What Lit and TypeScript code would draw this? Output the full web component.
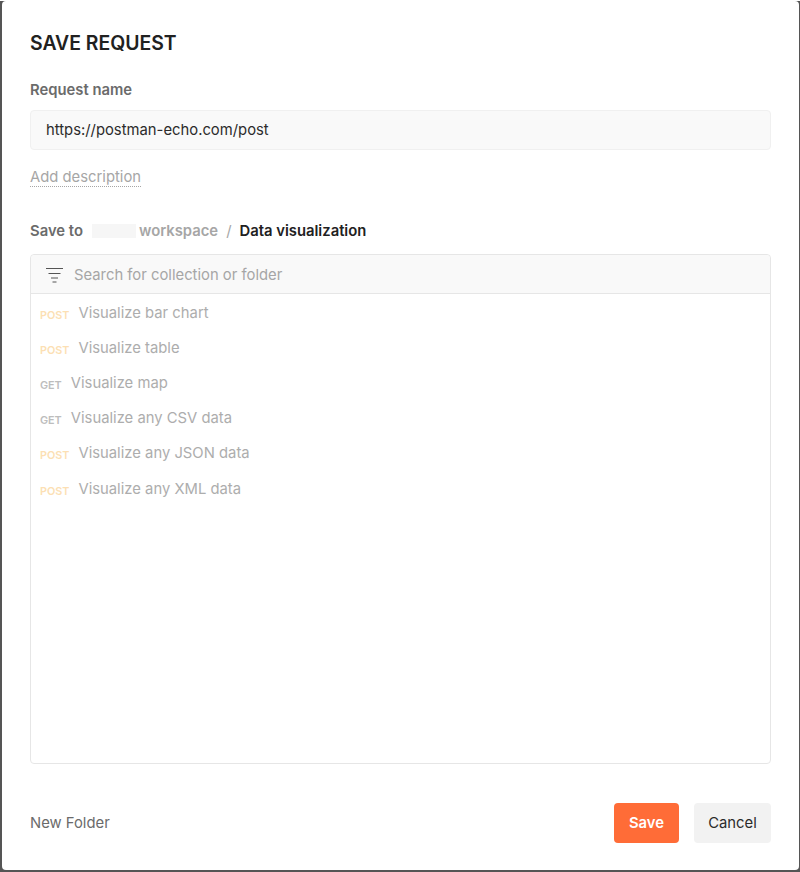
import { LitElement, html, css } from "lit";
import { customElement } from "lit/decorators.js";

const items: [string, string][] = [
  ["POST", "Visualize bar chart"],
  ["POST", "Visualize table"],
  ["GET", "Visualize map"],
  ["GET", "Visualize any CSV data"],
  ["POST", "Visualize any JSON data"],
  ["POST", "Visualize any XML data"],
];

@customElement("app-root")
export class AppRoot extends LitElement {
  static styles = css`
    :host {
      display: block;
      width: 800px;
      height: 872px;
      background: #555;
      font-family: Inter, "Liberation Sans", sans-serif;
      color: #212121;
    }
    .dialog {
      box-sizing: border-box;
      width: 797px;
      height: 869px;
      margin-left: 1.5px;
      margin-top: 1px;
      background: #fff;
      border-radius: 4px;
      padding: 31px 27.5px 0 28.5px;
      display: flex;
      flex-direction: column;
    }
    h1 {
      margin: 0;
      font-size: 19.4px;
      line-height: 22px;
      font-weight: 600;
      color: #212121;
    }
    .label {
      margin-top: 27px;
      font-size: 14.82px;
      line-height: 18px;
      font-weight: 600;
      color: #6b6b6b;
    }
    .name {
      box-sizing: border-box;
      margin-top: 11px;
      height: 40px;
      background: #f9f9f9;
      border: 1px solid #f0f0f0;
      border-radius: 4px;
      padding: 0 15px 1px;
      display: flex;
      align-items: center;
      font-size: 14.82px;
      color: #2b2b2b;
    }
    .desc {
      margin-top: 18px;
      align-self: flex-start;
      font-size: 14.82px;
      line-height: 18px;
      color: #a6a6a6;
      border-bottom: 1px dotted #a6a6a6;
    }
    .crumbs {
      margin-top: 35px;
      display: flex;
      align-items: center;
      font-size: 14.82px;
      line-height: 18px;
      font-weight: 600;
      color: #6b6b6b;
    }
    .redact {
      width: 44px;
      height: 14px;
      margin: 0 3px 0 9px;
      background: #f6f6f6;
    }
    .ws { color: #a6a6a6; }
    .sep { margin: 0 8px; color: #a6a6a6; font-weight: 400; }
    .cur { color: #212121; }
    .panel {
      margin-top: 14px;
      height: 510px;
      box-sizing: border-box;
      border: 1px solid #e6e6e6;
      border-radius: 4px;
      display: flex;
      flex-direction: column;
    }
    .search {
      box-sizing: border-box;
      height: 39px;
      flex: none;
      background: #f9f9f9;
      border-bottom: 1px solid #e6e6e6;
      border-radius: 4px 4px 0 0;
      display: flex;
      align-items: center;
      padding: 1px 0 0 15px;
      gap: 11px;
      font-size: 14.82px;
      color: #a6a6a6;
    }
    .search svg { display: block; flex: none; }
    .row {
      height: 35.2px;
      display: flex;
      align-items: center;
      gap: 9px;
      padding-left: 9px;
      font-size: 14.82px;
      color: #adadad;
    }
    .list { margin-top: 1px; }
    .m {
      font-size: 10.8px;
      font-weight: 600;
      padding-top: 6px;
      line-height: 12px;
    }
    .post { color: #fcdfb4; }
    .get { color: #bdbdbd; }
    .foot {
      flex: 1;
      display: flex;
      align-items: center;
      font-size: 14.82px;
      padding-top: 11px;
    }
    .new { color: #6b6b6b; margin-right: auto; }
    .btn {
      box-sizing: border-box;
      height: 40px;
      border-radius: 4px;
      display: flex;
      align-items: center;
      justify-content: center;
    }
    .save {
      width: 65px;
      background: #ff6c37;
      color: #fff;
      font-weight: 600;
      margin-right: 15px;
    }
    .cancel {
      width: 77px;
      background: #f2f2f2;
      color: #2b2b2b;
    }
  `;

  render() {
    return html`
      <div class="dialog">
        <h1>SAVE REQUEST</h1>
        <div class="label">Request name</div>
        <div class="name">https://postman-echo.com/post</div>
        <div class="desc">Add description</div>
        <div class="crumbs">
          <span>Save to</span><span class="redact"></span><span class="ws">workspace</span>
          <span class="sep">/</span><span class="cur">Data visualization</span>
        </div>
        <div class="panel">
          <div class="search">
            <svg width="17" height="16" viewBox="0 0 17 16" fill="none" stroke="#555" stroke-width="1">
              <path d="M0 1.5h17M2.5 6.5h12M5 11h7M6.5 15h4" />
            </svg>
            <span>Search for collection or folder</span>
          </div>
          <div class="list">
            ${items.map(
              ([m, t]) => html`<div class="row">
                <span class="m ${m === "POST" ? "post" : "get"}">${m}</span><span>${t}</span>
              </div>`
            )}
          </div>
        </div>
        <div class="foot">
          <span class="new">New Folder</span>
          <div class="btn save">Save</div>
          <div class="btn cancel">Cancel</div>
        </div>
      </div>
    `;
  }
}
